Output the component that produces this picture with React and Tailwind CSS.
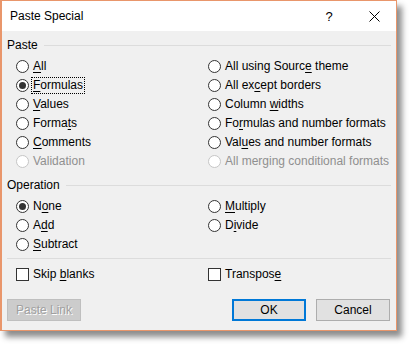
import React from 'react';

const Radio = ({ checked, disabled }) => (
  <span
    className={`flex h-[13px] w-[13px] shrink-0 items-center justify-center rounded-full border bg-white ${
      disabled ? 'border-[#c6c6c6]' : 'border-[#333333]'
    }`}
  >
    {checked && <span className="h-[7px] w-[7px] rounded-full bg-[#333333]" />}
  </span>
);

// label with an underlined access key
const Label = ({ text, k, disabled, focus }) => {
  const i = k == null ? -1 : k;
  return (
    <span
      className={`whitespace-nowrap ${disabled ? 'text-[#8f8f8f]' : 'text-black'} ${
        focus ? 'outline-1 outline-dotted outline-black px-px -mx-px' : ''
      }`}
    >
      {i < 0 ? (
        text
      ) : (
        <>
          {text.slice(0, i)}
          <u className="underline-offset-2">{text[i]}</u>
          {text.slice(i + 1)}
        </>
      )}
    </span>
  );
};

const Option = ({ text, k, checked, disabled, focus }) => (
  <div className="flex h-[19px] items-center gap-[4px]">
    <Radio checked={checked} disabled={disabled} />
    <Label text={text} k={k} disabled={disabled} focus={focus} />
  </div>
);

const GroupHeader = ({ title }) => (
  <div className="flex h-[15px] items-center gap-[6px]">
    <span>{title}</span>
    <div className="h-px flex-1 bg-[#dcdcdc]" />
  </div>
);

const Check = ({ text, k }) => (
  <div className="flex h-[19px] items-center gap-[4px]">
    <span className="h-[13px] w-[13px] shrink-0 border border-[#333333] bg-white" />
    <Label text={text} k={k} />
  </div>
);

export default function App() {
  return (
    <div className="h-[345px] w-[413px] bg-white font-['Liberation_Sans',Arial,sans-serif] text-[12px] leading-[15px] text-black">
      <div className="flex h-[331px] w-[397px] flex-col border border-l-2 border-[#e9966b] bg-[#f0f0f0] shadow-[5px_6px_6px_rgba(0,0,0,0.45)]">
        {/* title bar */}
        <div className="flex h-[30px] items-center bg-white pl-[8px]">
          <span className="flex-1 text-[12px]">Paste Special</span>
          <span className="mr-[8px] w-[30px] text-center text-[13px]">?</span>
          <span className="flex w-[44px] items-center justify-center">
            <svg width="11" height="11" viewBox="0 0 11 11">
              <path d="M0.5 0.5 L10.5 10.5 M10.5 0.5 L0.5 10.5" stroke="#000" strokeWidth="1" />
            </svg>
          </span>
        </div>

        <div className="flex flex-1 flex-col px-[5px] pt-[7px]">
          <GroupHeader title="Paste" />
          <div className="mt-[4px] grid grid-cols-[192px_1fr] pl-[9px]">
            <Option text="All" k={0} />
            <Option text="All using Source theme" k={15} />
            <Option text="Formulas" k={0} checked focus />
            <Option text="All except borders" k={6} />
            <Option text="Values" k={0} />
            <Option text="Column widths" k={7} />
            <Option text="Formats" k={5} />
            <Option text="Formulas and number formats" k={2} />
            <Option text="Comments" k={0} />
            <Option text="Values and number formats" k={3} />
            <Option text="Validation" disabled />
            <Option text="All merging conditional formats" disabled />
          </div>

          <div className="mt-[7px]">
            <GroupHeader title="Operation" />
          </div>
          <div className="mt-[4px] grid grid-cols-[192px_1fr] pl-[9px]">
            <Option text="None" k={1} checked />
            <Option text="Multiply" k={0} />
            <Option text="Add" k={1} />
            <Option text="Divide" k={1} />
            <Option text="Subtract" k={0} />
          </div>

          <div className="mt-[4px] h-px bg-[#dcdcdc]" />

          <div className="mt-[6px] grid grid-cols-[192px_1fr] pl-[9px]">
            <Check text="Skip blanks" k={5} />
            <Check text="Transpose" k={8} />
          </div>

          <div className="mt-[15px] flex items-center">
            <button className="flex h-[22px] w-[74px] items-center justify-center border border-[#bfbfbf] bg-[#cccccc] text-[#a0a0a0] [text-shadow:1px_1px_0_#ffffff]">
              Paste Link
            </button>
            <div className="flex-1" />
            <button className="flex h-[22px] w-[74px] items-center justify-center border-2 border-[#0078d7] bg-[#e1e1e1]">
              OK
            </button>
            <button className="ml-[10px] flex h-[22px] w-[74px] items-center justify-center border border-[#adadad] bg-[#e1e1e1]">
              Cancel
            </button>
            <div className="w-[1px]" />
          </div>
        </div>
      </div>
    </div>
  );
}
